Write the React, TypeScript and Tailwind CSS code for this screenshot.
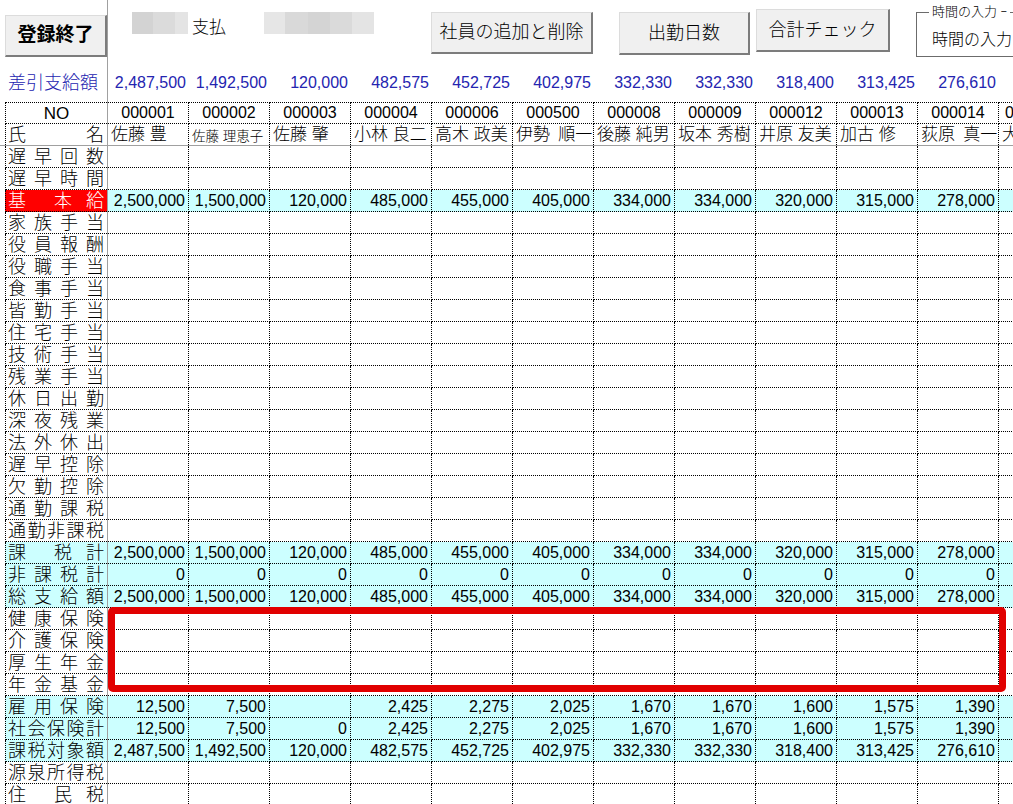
import React from 'react';

const F = "font-['Liberation_Sans','Noto_Sans_CJK_JP',sans-serif]";

type Col = {
  no: string;
  name: string;
  small?: boolean;
  base: string;
  koyo: string;
  shaho: string;
  net: string;
};

const cols: Col[] = [
  { no: '000001', name: '佐藤 豊', base: '2,500,000', koyo: '12,500', shaho: '12,500', net: '2,487,500' },
  { no: '000002', name: '佐藤 理恵子', small: true, base: '1,500,000', koyo: '7,500', shaho: '7,500', net: '1,492,500' },
  { no: '000003', name: '佐藤 肇', base: '120,000', koyo: '', shaho: '0', net: '120,000' },
  { no: '000004', name: '小林 良二', base: '485,000', koyo: '2,425', shaho: '2,425', net: '482,575' },
  { no: '000006', name: '高木 政美', base: '455,000', koyo: '2,275', shaho: '2,275', net: '452,725' },
  { no: '000500', name: '伊勢\u2009 順一', base: '405,000', koyo: '2,025', shaho: '2,025', net: '402,975' },
  { no: '000008', name: '後藤 純男', base: '334,000', koyo: '1,670', shaho: '1,670', net: '332,330' },
  { no: '000009', name: '坂本 秀樹', base: '334,000', koyo: '1,670', shaho: '1,670', net: '332,330' },
  { no: '000012', name: '井原 友美', base: '320,000', koyo: '1,600', shaho: '1,600', net: '318,400' },
  { no: '000013', name: '加古 修', base: '315,000', koyo: '1,575', shaho: '1,575', net: '313,425' },
  { no: '000014', name: '荻原\u2009 真一', base: '278,000', koyo: '1,390', shaho: '1,390', net: '276,610' },
];

type RowDef = { label: string; kind?: 'red' | 'cyan'; value?: (c: Col) => string };

const rows: RowDef[] = [
  { label: '遅早回数' },
  { label: '遅早時間' },
  { label: '基本給', kind: 'red', value: (c) => c.base },
  { label: '家族手当' },
  { label: '役員報酬' },
  { label: '役職手当' },
  { label: '食事手当' },
  { label: '皆勤手当' },
  { label: '住宅手当' },
  { label: '技術手当' },
  { label: '残業手当' },
  { label: '休日出勤' },
  { label: '深夜残業' },
  { label: '法外休出' },
  { label: '遅早控除' },
  { label: '欠勤控除' },
  { label: '通勤課税' },
  { label: '通勤非課税' },
  { label: '課税計', kind: 'cyan', value: (c) => c.base },
  { label: '非課税計', kind: 'cyan', value: () => '0' },
  { label: '総支給額', kind: 'cyan', value: (c) => c.base },
  { label: '健康保険' },
  { label: '介護保険' },
  { label: '厚生年金' },
  { label: '年金基金' },
  { label: '雇用保険', kind: 'cyan', value: (c) => c.koyo },
  { label: '社会保険計', kind: 'cyan', value: (c) => c.shaho },
  { label: '課税対象額', kind: 'cyan', value: (c) => c.net },
  { label: '源泉所得税' },
  { label: '住民税' },
];

function Divider() {
  return <div className="w-px shrink-0 bg-[#a0a0a0]" />;
}

function Label({ text, kind }: { text: string; kind?: 'red' | 'cyan' }) {
  const chars = Array.from(text);
  const bg = kind === 'red' ? 'bg-[#ff0000] text-white' : kind === 'cyan' ? 'bg-[#ccffff]' : '';
  return (
    <div
      className={`w-[102px] shrink-0 flex justify-between items-center pl-[2px] pr-[3px] border-l border-b border-dotted border-black text-[18px] leading-none ${bg}`}
    >
      {chars.map((ch, i) => (
        <span key={i} className={chars.length === 3 && i === 1 ? 'ml-[14px]' : ''}>
          {ch}
        </span>
      ))}
    </div>
  );
}

function Cell({
  children,
  cyan,
  className = '',
}: {
  children?: React.ReactNode;
  cyan?: boolean;
  className?: string;
}) {
  return (
    <div
      className={`w-[81px] shrink-0 h-full flex items-center border-r border-dotted border-black leading-none whitespace-pre overflow-hidden ${
        cyan ? 'bg-[#ccffff]' : ''
      } ${className}`}
    >
      {children}
    </div>
  );
}

function Btn({ children, className = '' }: { children: React.ReactNode; className?: string }) {
  return (
    <div
      className={`shrink-0 flex items-center justify-center bg-[#f0f0f0] border border-[#dcdcdc] border-r-2 border-b-2 border-r-[#7c7c7c] border-b-[#7c7c7c] ${className}`}
    >
      {children}
    </div>
  );
}

function Mosaic({ tones, className = '' }: { tones: [number, string][]; className?: string }) {
  return (
    <div className={`flex shrink-0 h-[22px] ${className}`}>
      {tones.map(([w, c], i) => (
        <div key={i} className="h-full" style={{ width: w, background: c }} />
      ))}
    </div>
  );
}

export default function App() {
  return (
    <div className={`relative w-[1013px] h-[804px] overflow-hidden bg-white text-black font-light ${F}`}>
      {/* toolbar */}
      <div className="flex h-[71px]">
        <div className="w-[107px] shrink-0 pl-[5px] pt-[15px]">
          <Btn className="w-[102px] h-[42px] text-[19px] font-bold">登録終了</Btn>
        </div>
        <Divider />
        <div className="flex items-start">
          <Mosaic
            className="ml-[24px] mt-[12px]"
            tones={[
              [21, '#d3d3d3'],
              [22, '#dbdbdb'],
              [13, '#e4e4e4'],
            ]}
          />
          <span className="ml-[4px] mt-[19px] w-[36px] shrink-0 text-[17px] leading-none">支払</span>
          <Mosaic
            className="ml-[36px] mt-[12px]"
            tones={[
              [21, '#e6e6e6'],
              [23, '#d9d9d9'],
              [22, '#d4d4d4'],
              [22, '#dadada'],
              [22, '#e4e4e4'],
            ]}
          />
          <Btn className="ml-[57px] mt-[12px] w-[162px] h-[42px] text-[18px]">社員の追加と削除</Btn>
          <Btn className="ml-[26px] mt-[12px] w-[131px] h-[43px] text-[18px]">出勤日数</Btn>
          <Btn className="ml-[6px] mt-[9px] w-[134px] h-[43px] text-[18px]">合計チェック</Btn>
          <fieldset className="ml-[26px] mt-[5px] w-[130px] h-[52px] shrink-0 min-w-0 border border-[#6b6b6b] p-0">
            <legend className="ml-[12px] px-[3px] text-[13px] leading-[14px] whitespace-nowrap">時間の入力 ｰ</legend>
            <div className="pl-[15px] mt-[13px] text-[16px] leading-none whitespace-nowrap">時間の入力</div>
          </fieldset>
        </div>
      </div>

      {/* 差引支給額 */}
      <div className="flex h-[23px] text-[#2424b0]">
        <div className="w-[107px] shrink-0 flex items-center pl-[8px] text-[18px] leading-none">差引支給額</div>
        <Divider />
        {cols.map((c) => (
          <div key={c.no} className="w-[81px] shrink-0 flex items-center justify-end pr-[3px] text-[16px] leading-none">
            {c.net}
          </div>
        ))}
      </div>
      <div className="flex h-[8px]">
        <div className="w-[107px] shrink-0" />
        <Divider />
      </div>

      {/* NO */}
      <div className="flex h-[22px]">
        <div className="w-[5px] shrink-0" />
        <div className="w-[102px] shrink-0 flex items-center justify-center border-l border-t border-b border-dotted border-black text-[17px] leading-none">
          NO
        </div>
        <Divider />
        {cols.map((c) => (
          <Cell key={c.no} className="justify-center border-t border-b text-[16px]">
            {c.no}
          </Cell>
        ))}
        <Cell className="justify-start pl-[6px] border-t border-b text-[16px]">000016</Cell>
      </div>

      {/* 氏名 */}
      <div className="flex h-[22px] border-b border-[#a0a0a0]">
        <div className="w-[5px] shrink-0" />
        <div className="w-[102px] shrink-0 flex justify-between items-center pl-[2px] pr-[3px] border-l border-dotted border-black text-[18px] leading-none">
          <span>氏</span>
          <span>名</span>
        </div>
        <Divider />
        {cols.map((c) => (
          <Cell key={c.no} className={`justify-start pl-[3px] ${c.small ? 'text-[13.5px] pt-[4px]' : 'text-[17px]'}`}>
            {c.name}
          </Cell>
        ))}
        <Cell className="justify-start pl-[3px] text-[17px]">大</Cell>
      </div>

      {/* body */}
      {rows.map((r) => (
        <div key={r.label} className="flex h-[22px]">
          <div className="w-[5px] shrink-0" />
          <Label text={r.label} kind={r.kind} />
          <Divider />
          {cols.map((c) => (
            <Cell key={c.no} cyan={!!r.kind} className="justify-end pr-[3px] pt-[1px] border-b text-[16px]">
              {r.value ? r.value(c) : ''}
            </Cell>
          ))}
          <Cell cyan={!!r.kind} className="border-b" />
        </div>
      ))}

      {/* highlight */}
      <div className="absolute left-[108px] top-[607px] w-[898px] h-[85px] border-[7px] border-[#e10000] rounded-[5px] pointer-events-none" />
    </div>
  );
}
